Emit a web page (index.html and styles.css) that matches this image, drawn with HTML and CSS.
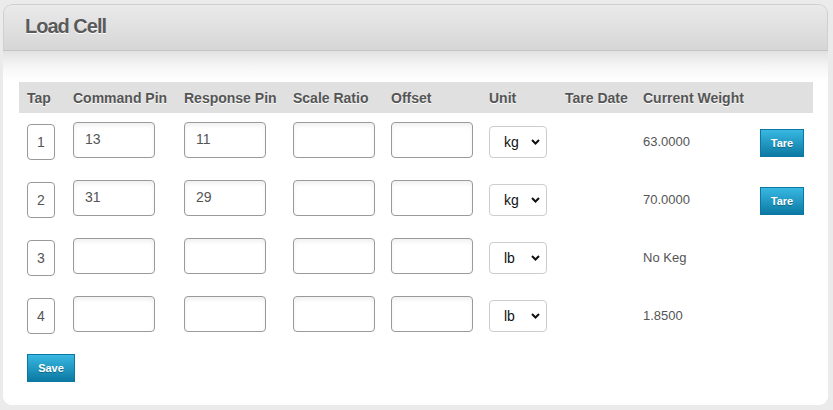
FILE: index.html
```html
<!DOCTYPE html>
<html>
<head>
<meta charset="utf-8">
<link rel="stylesheet" href="styles.css">
</head>
<body>
<div class="card">
  <div class="card-header"><h1 class="title">Load Cell</h1></div>
  <div class="card-body">
    <table class="cells">
      <colgroup>
        <col class="c-tap"><col class="c-cmd"><col class="c-resp"><col class="c-scale"><col class="c-off"><col class="c-unit"><col class="c-date"><col class="c-weight"><col class="c-btn">
      </colgroup>
      <thead>
        <tr><th>Tap</th><th>Command Pin</th><th>Response Pin</th><th>Scale Ratio</th><th>Offset</th><th>Unit</th><th>Tare Date</th><th>Current Weight</th><th></th></tr>
      </thead>
      <tbody>
        <tr>
          <td><div class="tap">1</div></td>
          <td><div class="field">13</div></td>
          <td><div class="field">11</div></td>
          <td><div class="field"></div></td>
          <td><div class="field"></div></td>
          <td><div class="select"><span>kg</span><svg width="9" height="6" viewBox="0 0 9 6"><path d="M1 1 L4.5 4.5 L8 1" fill="none" stroke="#111" stroke-width="2"/></svg></div></td>
          <td></td>
          <td><div class="weight">63.0000</div></td>
          <td><button class="btn tare">Tare</button></td>
        </tr>
        <tr>
          <td><div class="tap">2</div></td>
          <td><div class="field">31</div></td>
          <td><div class="field">29</div></td>
          <td><div class="field"></div></td>
          <td><div class="field"></div></td>
          <td><div class="select"><span>kg</span><svg width="9" height="6" viewBox="0 0 9 6"><path d="M1 1 L4.5 4.5 L8 1" fill="none" stroke="#111" stroke-width="2"/></svg></div></td>
          <td></td>
          <td><div class="weight">70.0000</div></td>
          <td><button class="btn tare">Tare</button></td>
        </tr>
        <tr>
          <td><div class="tap">3</div></td>
          <td><div class="field"></div></td>
          <td><div class="field"></div></td>
          <td><div class="field"></div></td>
          <td><div class="field"></div></td>
          <td><div class="select"><span>lb</span><svg width="9" height="6" viewBox="0 0 9 6"><path d="M1 1 L4.5 4.5 L8 1" fill="none" stroke="#111" stroke-width="2"/></svg></div></td>
          <td></td>
          <td><div class="weight">No Keg</div></td>
          <td></td>
        </tr>
        <tr>
          <td><div class="tap">4</div></td>
          <td><div class="field"></div></td>
          <td><div class="field"></div></td>
          <td><div class="field"></div></td>
          <td><div class="field"></div></td>
          <td><div class="select"><span>lb</span><svg width="9" height="6" viewBox="0 0 9 6"><path d="M1 1 L4.5 4.5 L8 1" fill="none" stroke="#111" stroke-width="2"/></svg></div></td>
          <td></td>
          <td><div class="weight">1.8500</div></td>
          <td></td>
        </tr>
      </tbody>
    </table>
    <button class="btn save">Save</button>
  </div>
</div>
</body>
</html>
```
FILE: styles.css
```css
html, body {
  margin: 0;
  padding: 0;
}
body {
  background: #ebebeb;
  font-family: "Liberation Sans", Arial, sans-serif;
  color: #555;
  height: 410px;
  overflow: hidden;
}
.card {
  margin: 4px 5px 0 3px;
  width: 825px;
  background: #fff;
  border-radius: 9px;
}
.card-header {
  border: 1px solid #cfcfcf;
  border-bottom-color: #c4c4c4;
  border-radius: 9px 9px 0 0;
  background: linear-gradient(to bottom, #eaeaea, #d6d6d6);
  padding: 9px 0 12px 21px;
}
.title {
  margin: 0;
  font-size: 20px;
  line-height: 24px;
  font-weight: bold;
  letter-spacing: -1px;
  color: #5a5a5a;
  text-shadow: 0 1px 0 #fff;
}
.card-body {
  padding: 31px 15px 23px 16px;
  background: linear-gradient(to bottom, #e2e2e2 0, #f6f6f6 16px, #fff 30px);
  border-radius: 0 0 9px 9px;
}
.cells {
  width: 794px;
  table-layout: fixed;
  border-collapse: collapse;
}
.c-tap { width: 46px; }
.c-cmd { width: 111px; }
.c-resp { width: 109px; }
.c-scale { width: 98px; }
.c-off { width: 98px; }
.c-unit { width: 76px; }
.c-date { width: 78px; }
.c-weight { width: 117px; }
.c-btn { width: 61px; }
.cells th {
  background: #e0e0e0;
  height: 31px;
  padding: 0 8px;
  text-align: left;
  font-size: 14px;
  font-weight: bold;
  color: #555;
  text-shadow: 0 1px 0 #fff;
  white-space: nowrap;
}
.cells tbody tr {
  height: 58px;
}
.cells td {
  vertical-align: top;
  padding: 9px 8px 0;
}
.tap {
  box-sizing: border-box;
  width: 28px;
  height: 36px;
  margin-top: 2px;
  border: 1px solid #999;
  border-radius: 4px;
  font-size: 14px;
  line-height: 34px;
  text-align: center;
  color: #555;
}
.field {
  box-sizing: border-box;
  width: 82px;
  height: 36px;
  border: 1px solid #9a9a9a;
  border-radius: 4px;
  box-shadow: inset 0 3px 4px rgba(0, 0, 0, 0.06);
  font-size: 14px;
  line-height: 33px;
  padding-left: 11px;
  color: #555;
}
.select {
  box-sizing: border-box;
  width: 58px;
  height: 32px;
  margin-top: 4px;
  border: 1px solid #cdcdcd;
  border-radius: 4px;
  display: flex;
  align-items: center;
  justify-content: space-between;
  padding: 0 6px 0 14px;
  font-size: 14px;
  color: #111;
}
.select svg {
  display: block;
}
.weight {
  font-size: 13px;
  line-height: 36px;
  padding-top: 2px;
  color: #555;
}
.btn {
  box-sizing: border-box;
  height: 28px;
  border: 1px solid #0c78a1;
  border-radius: 0;
  background: linear-gradient(to bottom, #38b8e2, #0b79a3);
  color: #fff;
  font-family: "Liberation Sans", Arial, sans-serif;
  font-size: 11px;
  font-weight: bold;
  text-shadow: 0 1px 0 rgba(0, 0, 0, 0.3);
  padding: 0;
  display: block;
}
.tare {
  width: 44px;
  margin-top: 7px;
}
.save {
  width: 48px;
  margin: 9px 0 0 8px;
}
```
